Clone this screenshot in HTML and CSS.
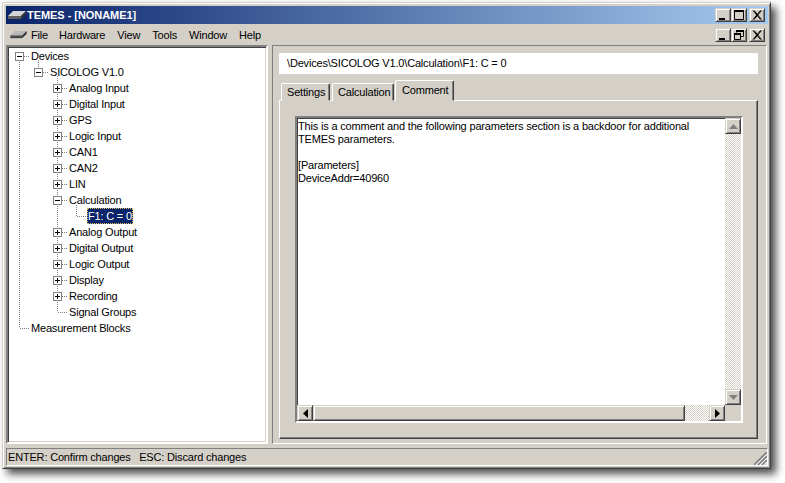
FILE: index.html
```html
<!DOCTYPE html>
<html lang="en">
<head>
<meta charset="utf-8">
<title>TEMES</title>
<link rel="stylesheet" href="styles.css">
</head>
<body>
<div class="window">
  <div class="titlebar">
    <svg class="appicon" width="18" height="11" viewBox="0 0 18 11"><polygon points="5,1 18,1 13,6 0,6" fill="#d4d4d4"/><polygon points="0,6 13,6 13,9 0,9" fill="#606060"/><polygon points="13,6 18,1 18,4 13,9" fill="#383838"/></svg>
    <span class="title-text">TEMES - [NONAME1]</span>
    <div class="btns">
      <span class="btn bevel"><svg width="12" height="10" viewBox="0 0 12 10"><rect x="2" y="8" width="6" height="2"/></svg></span>
      <span class="btn bevel"><svg width="12" height="10" viewBox="0 0 12 10"><path d="M1 .5H10.5V9.5H1.5V1" fill="none" stroke="#000"/><rect x="1" y="0" width="10" height="2"/></svg></span>
      <span class="btn bevel btn-close"><svg width="12" height="10" viewBox="0 0 12 10"><path d="M2 0.5L9.5 9.5M3 0.5L10.5 9.5M9.5 0.5L2 9.5M10.5 0.5L3 9.5" stroke="#000" fill="none"/></svg></span>
    </div>
  </div>
  <div class="menubar">
    <svg class="menuicon" width="17" height="10" viewBox="0 0 18 11"><polygon points="5,1 18,1 13,6 0,6" fill="#b8b8b8"/><polygon points="0,6 13,6 13,9 0,9" fill="#484848"/><polygon points="13,6 18,1 18,4 13,9" fill="#303030"/></svg>
    <span class="menu menu-file">File</span><span class="menu">Hardware</span><span class="menu">View</span><span class="menu">Tools</span><span class="menu">Window</span><span class="menu">Help</span>
    <div class="btns">
      <span class="btn bevel"><svg width="12" height="10" viewBox="0 0 12 10"><rect x="2" y="8" width="6" height="2"/></svg></span>
      <span class="btn bevel"><svg width="12" height="10" viewBox="0 0 12 10"><path d="M3.5 2.5V.5H10.5V6.5H8M1.5 3.5H7.5V9.5H1.5Z" fill="none" stroke="#000"/><rect x="3" y="0" width="8" height="2"/><rect x="1" y="3" width="7" height="2"/></svg></span>
      <span class="btn bevel btn-close"><svg width="12" height="10" viewBox="0 0 12 10"><path d="M2 0.5L9.5 9.5M3 0.5L10.5 9.5M9.5 0.5L2 9.5M10.5 0.5L3 9.5" stroke="#000" fill="none"/></svg></span>
    </div>
  </div>
  <div class="main">
    <div class="tree sunken">
      <svg class="treelines" width="258" height="395" viewBox="8 47 258 395"><path d="M19.5 60V328M24 56.5H29M38.5 60V68M43 72.5H48M57.5 76V312M62 88.5H67M62 104.5H67M62 120.5H67M62 136.5H67M62 152.5H67M62 168.5H67M62 184.5H67M62 200.5H67M62 232.5H67M62 248.5H67M62 264.5H67M62 280.5H67M62 296.5H67M58 312.5H67M76.5 205V216M77 216.5H86M20 328.5H29" fill="none" stroke="#808080" stroke-dasharray="1 1"/></svg>
      <div class="row lv0"><i class="exp minus"></i><span class="label">Devices</span></div>
      <div class="row lv1"><i class="exp minus"></i><span class="label">SICOLOG V1.0</span></div>
      <div class="row lv2"><i class="exp plus"></i><span class="label">Analog Input</span></div>
      <div class="row lv2"><i class="exp plus"></i><span class="label">Digital Input</span></div>
      <div class="row lv2"><i class="exp plus"></i><span class="label">GPS</span></div>
      <div class="row lv2"><i class="exp plus"></i><span class="label">Logic Input</span></div>
      <div class="row lv2"><i class="exp plus"></i><span class="label">CAN1</span></div>
      <div class="row lv2"><i class="exp plus"></i><span class="label">CAN2</span></div>
      <div class="row lv2"><i class="exp plus"></i><span class="label">LIN</span></div>
      <div class="row lv2"><i class="exp minus"></i><span class="label">Calculation</span></div>
      <div class="row lv3"><span class="label selected">F1: C = 0</span></div>
      <div class="row lv2"><i class="exp plus"></i><span class="label">Analog Output</span></div>
      <div class="row lv2"><i class="exp plus"></i><span class="label">Digital Output</span></div>
      <div class="row lv2"><i class="exp plus"></i><span class="label">Logic Output</span></div>
      <div class="row lv2"><i class="exp plus"></i><span class="label">Display</span></div>
      <div class="row lv2"><i class="exp plus"></i><span class="label">Recording</span></div>
      <div class="row leaf2"><span class="label">Signal Groups</span></div>
      <div class="row leaf0"><span class="label">Measurement Blocks</span></div>
    </div>
    <div class="pane">
      <div class="path">\Devices\SICOLOG V1.0\Calculation\F1: C = 0</div>
      <div class="tabs">
        <span class="tab tab-settings">Settings</span>
        <span class="tab tab-calc">Calculation</span>
        <span class="tab active">Comment</span>
      </div>
      <div class="page">
        <div class="memo">
          <div class="memo-top">
            <div class="memo-text">This is a comment and the following parameters section is a backdoor for additional<br>TEMES parameters.<br><br>[Parameters]<br>DeviceAddr=40960</div>
            <div class="vscroll">
              <span class="sbtn bevel"><svg width="9" height="5" viewBox="0 0 9 5"><polygon points="4.5,0 9,5 0,5" fill="#808080"/></svg></span>
              <span class="track"></span>
              <span class="sbtn bevel"><svg width="9" height="5" viewBox="0 0 9 5"><polygon points="0,0 9,0 4.5,5" fill="#808080"/></svg></span>
            </div>
          </div>
          <div class="hscroll">
            <span class="sbtn bevel"><svg width="5" height="9" viewBox="0 0 5 9"><polygon points="5,0 5,9 0,4.5" fill="#000"/></svg></span>
            <span class="thumb bevel"></span>
            <span class="track"></span>
            <span class="sbtn bevel"><svg width="5" height="9" viewBox="0 0 5 9"><polygon points="0,0 0,9 5,4.5" fill="#000"/></svg></span>
            <span class="corner"></span>
          </div>
        </div>
      </div>
    </div>
  </div>
  <div class="status">
    <span>ENTER: Confirm changes&nbsp;&nbsp; ESC: Discard changes</span>
    <svg class="grip" width="13" height="13" viewBox="0 0 13 13"><path d="M0 13L13 0M4 13L13 4M8 13L13 8" stroke="#808080" stroke-width="1.6" fill="none"/><path d="M2 13L13 2M6 13L13 6M10 13L13 10" stroke="#fff" fill="none"/></svg>
  </div>
</div>
</body>
</html>
```
FILE: styles.css
```css
* { box-sizing: border-box; }
html, body { margin: 0; padding: 0; background: #fff; }
body {
  width: 785px;
  height: 483px;
  overflow: hidden;
  font: 11px/16px "Liberation Sans", Arial, sans-serif;
  letter-spacing: -.18px;
  color: #000;
  padding: 2px 0 0 2px;
}
.window {
  width: 769px;
  height: 467px;
  background: #d4d0c8;
  border: 1px solid;
  border-color: #d4d0c8 #404040 #404040 #d4d0c8;
  box-shadow: inset 1px 1px #fff, inset -1px -1px #808080, 5px 5px 8px rgba(0, 0, 0, .7);
  padding: 3px 2px 2px 3px;
  display: flex;
  flex-direction: column;
}
.bevel {
  background: #d4d0c8;
  border: 1px solid;
  border-color: #d4d0c8 #404040 #404040 #d4d0c8;
  box-shadow: inset 1px 1px #fff, inset -1px -1px #808080;
}
.titlebar {
  height: 18px;
  flex: none;
  display: flex;
  align-items: center;
  background: linear-gradient(90deg, #0a246a, #a6caf0);
  color: #fff;
  font-weight: bold;
  letter-spacing: -.05px;
  padding-left: 2px;
}
.appicon { flex: none; margin-right: 1px; }
.btns { margin-left: auto; display: flex; margin-right: 3px; }
.btn {
  width: 16px;
  height: 14px;
  display: flex;
  align-items: center;
  justify-content: center;
}
.btn-close { margin-left: 2px; }
.menubar {
  height: 21px;
  flex: none;
  display: flex;
  align-items: center;
  padding-left: 4px;
}
.menuicon { flex: none; margin-right: 4px; }
.menu { margin-right: 12px; }
.menu-file { margin-right: 11px; }
.main {
  height: 399px;
  flex: none;
  display: flex;
  gap: 4px;
}
.sunken {
  border: 2px solid;
  border-color: #808080 #fff #fff #808080;
  box-shadow: inset 1px 1px #404040;
}
.tree {
  width: 262px;
  flex: none;
  background: #fff;
  position: relative;
  padding-top: 1px;
  box-shadow: inset 1px 1px #404040, inset -1px -1px #d4d0c8;
}
.treelines { position: absolute; left: 0; top: 0; }
.row {
  height: 16px;
  display: flex;
  align-items: center;
  position: relative;
}
.lv0 { padding-left: 7px; }
.lv1 { padding-left: 26px; }
.lv2 { padding-left: 45px; }
.lv3 { padding-left: 79px; }
.leaf2 { padding-left: 61px; }
.leaf0 { padding-left: 23px; }
.exp {
  width: 9px;
  height: 9px;
  flex: none;
  border: 1px solid #808080;
  margin-right: 7px;
  background-color: #fff;
  background-repeat: no-repeat;
}
.minus { background-image: linear-gradient(#000, #000); background-size: 5px 1px; background-position: center; }
.plus {
  background-image: linear-gradient(#000, #000), linear-gradient(#000, #000);
  background-size: 5px 1px, 1px 5px;
  background-position: center, center;
}
.selected {
  background: #0a246a;
  color: #fff;
  padding: 0 1px;
  height: 16px;
  outline: 1px dotted #e0c060;
  outline-offset: -1px;
}
.pane {
  width: 495px;
  flex: none;
  border: 1px solid;
  border-color: #808080 #fff #fff #808080;
  padding: 7px 8px 4px 6px;
  display: flex;
  flex-direction: column;
}
.path {
  height: 21px;
  background: #fff;
  padding: 2px 0 0 8px;
  flex: none;
}
.tabs {
  display: flex;
  align-items: flex-end;
  height: 21px;
  margin-top: 6px;
  margin-bottom: -1px;
  padding-left: 2px;
  flex: none;
  position: relative;
  z-index: 1;
}
.tab {
  height: 18px;
  border: 1px solid;
  border-color: #fff #404040 transparent #fff;
  border-radius: 2px 2px 0 0;
  box-shadow: inset -1px 0 #808080;
  padding: 0 0 0 5px;
  background: #d4d0c8;
}
.tab-settings { width: 49px; margin-right: 2px; }
.tab-calc { width: 62px; margin-right: 1px; }
.tab.active { height: 21px; width: 59px; padding: 1px 0 0 6px; }
.page {
  flex: 1;
  background: #d4d0c8;
  border: 1px solid;
  border-color: #fff #404040 #404040 #fff;
  box-shadow: inset -1px -1px #808080;
  padding: 15px 14px 15px 15px;
  display: flex;
  min-height: 0;
}
.memo {
  flex: 1;
  background: #fff;
  border: 2px solid;
  border-color: #808080 #fff #fff #808080;
  box-shadow: inset 1px 1px #404040;
  display: flex;
  flex-direction: column;
  min-width: 0;
}
.memo-top { flex: 1; display: flex; min-height: 0; }
.memo-text {
  flex: 1;
  padding: 2px 0 0 1px;
  line-height: 13px;
  white-space: nowrap;
}
.vscroll { width: 16px; flex: none; display: flex; flex-direction: column; }
.hscroll { height: 16px; flex: none; display: flex; }
.sbtn {
  width: 16px;
  height: 16px;
  flex: none;
  display: flex;
  align-items: center;
  justify-content: center;
}
.track {
  flex: 1;
  background-image: conic-gradient(#fff 25%, #d4d0c8 0 50%, #fff 0 75%, #d4d0c8 0);
  background-size: 2px 2px;
}
.hscroll .track { flex: none; width: 24px; }
.thumb { width: 372px; flex: none; }
.corner { width: 16px; background: #d4d0c8; flex: none; }
.status {
  height: 18px;
  flex: none;
  margin-top: 4px;
  border: 1px solid;
  border-color: #808080 #fff #fff #808080;
  padding: 0 0 0 1px;
  display: flex;
  align-items: center;
  justify-content: space-between;
}
.grip { align-self: flex-end; }
```
